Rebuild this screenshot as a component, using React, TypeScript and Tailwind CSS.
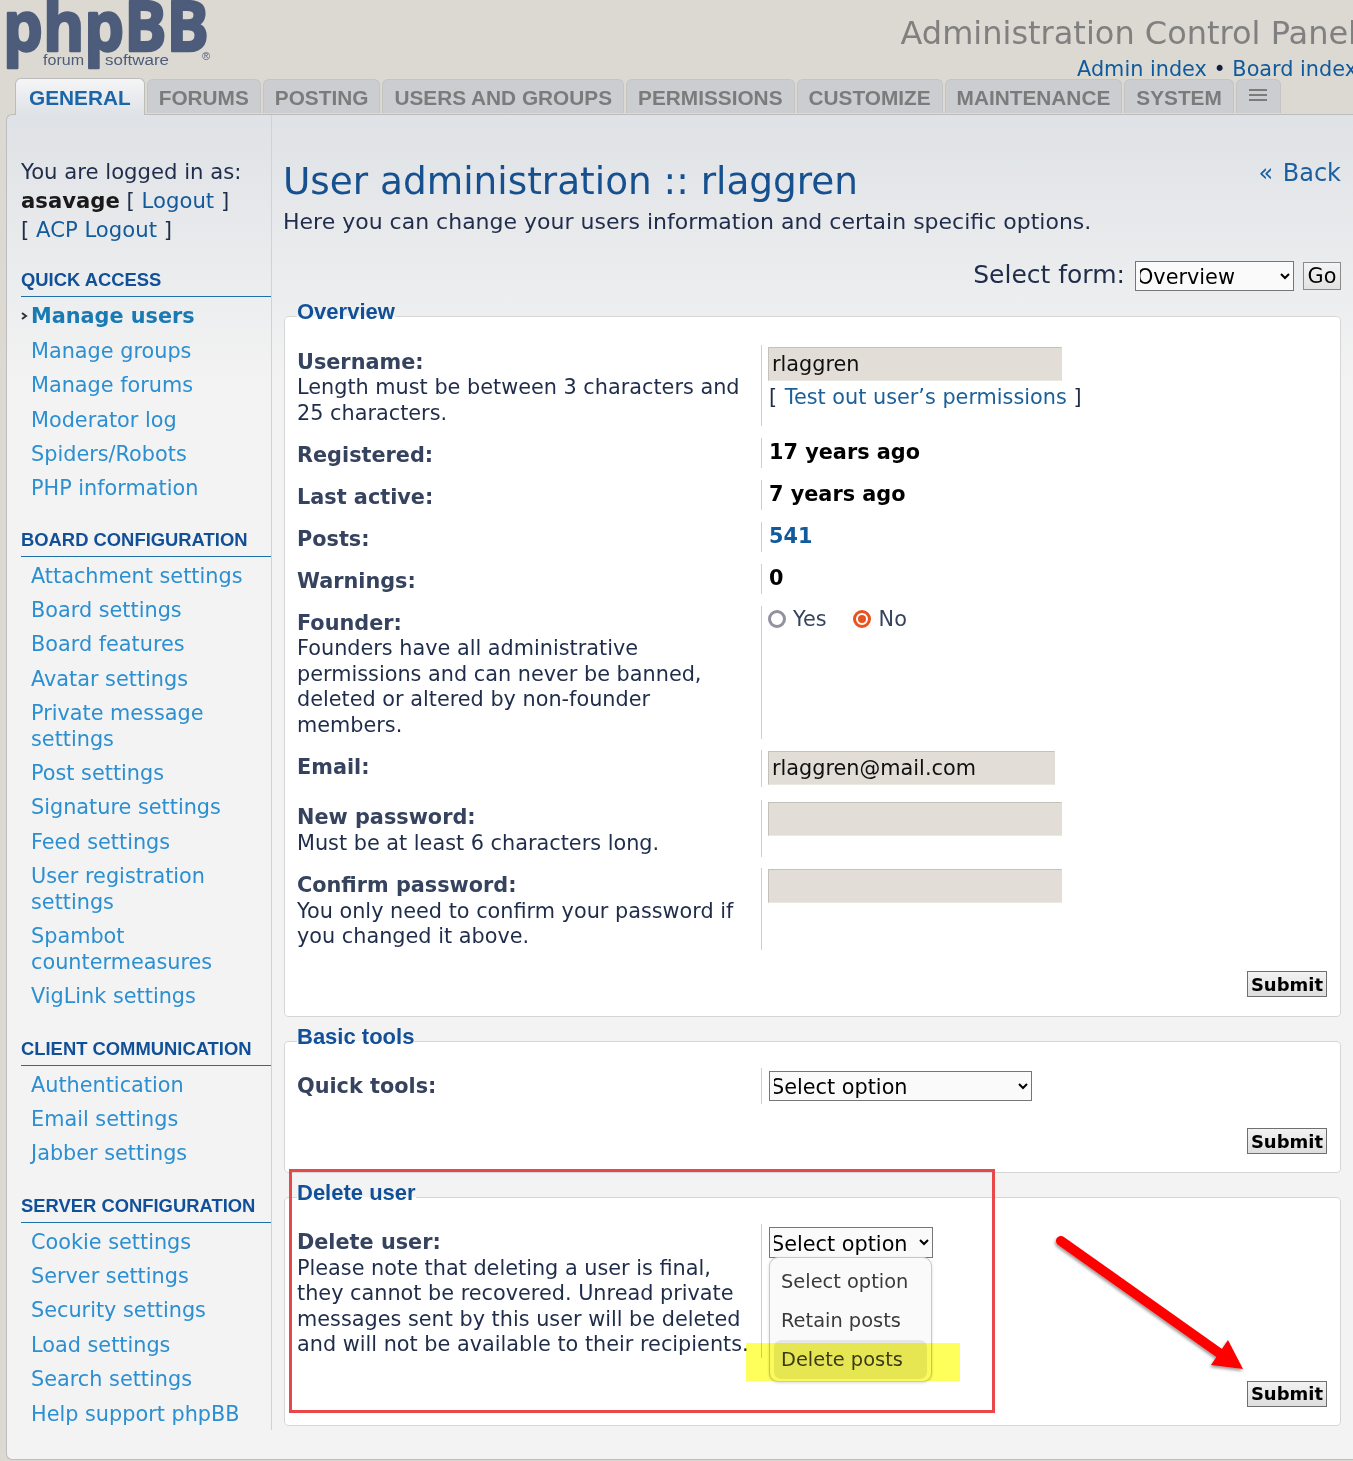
const dv = "font-['DejaVu_Sans',sans-serif]";

function SideGroup({ title, items }: { title: string; items: (string | string[])[] }) {
  return (
    <div className="mt-[23px]">
      <h3 className="font-['Liberation_Sans',sans-serif] font-bold text-[18.4px] leading-[24px] pb-[4px] border-b border-[#1f6fa8] text-[#115098] uppercase whitespace-nowrap">
        {title}
      </h3>
      <ul className="mt-[2px]">
        {items.map((it, i) => (
          <li key={i} className="pl-[10px] py-[4.4px] text-[20.8px] leading-[25.6px] text-[#2b8fd1]">
            {Array.isArray(it) ? it.map((l) => <div key={l}>{l}</div>) : it}
          </li>
        ))}
      </ul>
    </div>
  );
}

function Row({ label, desc, children, low, className }: { label: string; desc?: string; children: React.ReactNode; low?: boolean; className?: string }) {
  return (
    <div className={"flex items-start " + (className ?? "mb-[11.4px]")}>
      <div className={(low ? "pt-[6px] " : "pt-[5px] ") + "w-[464px] shrink-0 pr-[10px] text-[20.8px] leading-[25.6px] text-[#1f2c4a]"}>
        <div className="font-bold text-[#35435f]">{label}</div>
        {desc && <div>{desc}</div>}
      </div>
      <div className="border-l border-[#cfcfcf] pl-[7px] text-[20.8px] leading-[28px] self-stretch">{children}</div>
    </div>
  );
}

function Box({ legend, children, className }: { legend: string; children: React.ReactNode; className?: string }) {
  return (
    <fieldset className={"min-w-0 border border-[#d6d6d6] rounded-[4px] bg-white pl-[12px] pr-[13px] " + (className ?? "")}>
      <legend className="font-['Liberation_Sans',sans-serif] font-bold text-[22px] leading-[24px] pb-[8px] text-[#115098]">
        {legend}
      </legend>
      {children}
    </fieldset>
  );
}

function Submit({ className }: { className?: string }) {
  return (
    <div className={"flex justify-end " + (className ?? "")}>
      <button className="w-[80px] h-[26px] pt-[1px] border border-[#6f6f6f] bg-gradient-to-b from-[#f2f2f2] to-[#dedede] font-bold text-[18px] leading-[22px] text-black">
        Submit
      </button>
    </div>
  );
}

function Field({ className }: { className: string }) {
  return <div className={"-ml-[1px] bg-[#e2ddd7] border border-[#c4c1ba] border-b-[#ebe8e2] border-r-[#e2ddd7] " + className} />;
}

export default function App() {
  return (
    <div className={"relative w-[1353px] h-[1461px] overflow-hidden bg-[#dcd9d2] " + dv}>
      <header className="flex h-[79px]">
        <svg width="220" height="79" viewBox="0 0 220 79" className="shrink-0" aria-label="phpBB logo">
          <text x="3" y="51" fontFamily="'Open Sans', sans-serif" fontWeight="700" fontSize="69" fill="#4c5c7a" stroke="#4c5c7a" strokeWidth="2.5" strokeLinejoin="round" textLength="206" lengthAdjust="spacingAndGlyphs">phpBB</text>
          <text x="43" y="65" fontFamily="'Liberation Sans', sans-serif" fontSize="15.5" fill="#4c5c7a" textLength="41" lengthAdjust="spacingAndGlyphs">forum</text>
          <text x="105" y="65" fontFamily="'Liberation Sans', sans-serif" fontSize="15.5" fill="#4c5c7a" textLength="64" lengthAdjust="spacingAndGlyphs">software</text>
          <text x="202" y="60" fontFamily="'Liberation Sans', sans-serif" fontSize="11" fill="#4c5c7a">®</text>
        </svg>
        <div className="ml-auto -mr-[4px] text-right whitespace-nowrap">
          <div className="mt-[14px] text-[32px] leading-[38px] text-[#808080]">Administration Control Panel</div>
          <div className="mt-[4px] text-[20.8px] leading-[26px] text-[#0f5a9c]">
            Admin index <span className="text-[#10203f]">•</span> Board index
          </div>
        </div>
      </header>

      <nav className="relative z-10 flex gap-[2px] pl-[15px] h-[36px] -mb-[1px] font-['Liberation_Sans',sans-serif] font-bold text-[20.8px] whitespace-nowrap">
        <div className="px-[13px] h-[37px] pt-[6px] leading-[26px] -mt-[1px] rounded-t-[6px] border border-b-0 border-[#bcbcbc] bg-gradient-to-b from-[#f5f5f6] to-[#dfe2e6] text-[#1a66a8]">GENERAL</div>
        {["FORUMS", "POSTING", "USERS AND GROUPS", "PERMISSIONS", "CUSTOMIZE", "MAINTENANCE", "SYSTEM"].map((t) => (
          <div key={t} className="px-[11px] h-[34px] pt-[5px] leading-[26px] rounded-t-[6px] border border-b-0 border-[#c4c4c4] bg-[#cbcdd1] text-[#7b7b7b]">{t}</div>
        ))}
        <div className="w-[45px] h-[34px] rounded-t-[6px] border border-b-0 border-[#c4c4c4] bg-[#cbcdd1] flex flex-col items-center gap-[3px] pt-[9px]">
          <span className="w-[18px] h-[2px] bg-[#7b7b7b]" />
          <span className="w-[18px] h-[2px] bg-[#7b7b7b]" />
          <span className="w-[18px] h-[2px] bg-[#7b7b7b]" />
        </div>
      </nav>

      <main className="flex h-[1346px] ml-[6px] border border-r-0 border-[#bdbdbd] rounded-tl-[6px] rounded-bl-[6px] bg-gradient-to-b from-[#dfe2e6] from-0% to-[#f3f3f3] to-[20%]">
        <aside className="w-[265px] shrink-0 h-[1315px] pl-[14px] pt-[42px] border-r border-[#d2d2d2] text-[20.8px] leading-[29px] text-[#1f2c4a]">
          <div className="text-[21.2px]">You are logged in as:</div>
          <div className="text-[21.2px]"><b className="text-[#1a1a1a]">asavage</b> [ <span className="text-[#115a9c]">Logout</span> ]</div>
          <div className="text-[21.2px]">[ <span className="text-[#115a9c]">ACP Logout</span> ]</div>

          <div className="mt-[24px]">
            <h3 className="font-['Liberation_Sans',sans-serif] font-bold text-[18.4px] leading-[24px] pb-[4px] border-b border-[#1f6fa8] text-[#115098] whitespace-nowrap">QUICK ACCESS</h3>
            <ul className="mt-[3px] -mb-[1px]">
              <li className="flex items-center py-[4.4px] text-[20.8px] leading-[25.6px] font-bold text-[#1a7ab3]">
                <svg width="10" height="10" viewBox="0 0 10 10" className="shrink-0 -mt-[2px]"><path d="M1 2 L5 5 L1 8" fill="none" stroke="#333" strokeWidth="2" /></svg>
                <span>Manage users</span>
              </li>
              {["Manage groups", "Manage forums", "Moderator log", "Spiders/Robots", "PHP information"].map((t) => (
                <li key={t} className="pl-[10px] py-[4.4px] text-[20.8px] leading-[25.6px] text-[#2b8fd1]">{t}</li>
              ))}
            </ul>
          </div>
          <SideGroup title="Board configuration" items={["Attachment settings", "Board settings", "Board features", "Avatar settings", ["Private message", "settings"], "Post settings", "Signature settings", "Feed settings", ["User registration", "settings"], ["Spambot", "countermeasures"], "VigLink settings"]} />
          <SideGroup title="Client communication" items={["Authentication", "Email settings", "Jabber settings"]} />
          <SideGroup title="Server configuration" items={["Cookie settings", "Server settings", "Security settings", "Load settings", "Search settings", "Help support phpBB"]} />
        </aside>

        <section className="flex-1 min-w-0 pl-[12px] pr-[12px] pt-[42px]">
          <div className="flex justify-between items-start">
            <h1 className="-ml-[1px] text-[37.4px] leading-[48px] text-[#16508f] whitespace-nowrap">User administration :: rlaggren</h1>
            <div className="mt-[1px] text-[24px] leading-[30px] text-[#1b5f9e]">« <span className="ml-[2px]">Back</span></div>
          </div>
          <p className="-ml-[1px] mt-[4px] text-[22px] leading-[26px] text-[#1f2c4a]">Here you can change your users information and certain specific options.</p>
          <div className="mt-[26px] mb-[9px] flex justify-end items-center h-[30px]">
            <span className="text-[25px] text-[#1f2c4a] mr-[10px] -mt-[3px]">Select form:</span>
            <select className="w-[159px] h-[30px] pt-[2px] border border-[#767676] bg-[#fafafa] text-[20.8px] text-black indent-[-3px]"><option>Overview</option></select>
            <button className="ml-[9px] w-[38px] h-[28px] border border-[#8a8a8a] bg-gradient-to-b from-[#f4f4f4] to-[#e2e2e2] text-[20.8px] leading-[26px] text-black">Go</button>
          </div>

          <Box legend="Overview">
            <div className="pt-[12.5px]">
              <Row label="Username:" desc="Length must be between 3 characters and 25 characters.">
                <div className="-ml-[1px] w-[294px] h-[34px] mt-[2px] bg-[#e2ddd7] border border-[#c4c1ba] border-b-[#ebe8e2] border-r-[#e2ddd7] pl-[3px] leading-[32px] text-[#101010]">rlaggren</div>
                <div className="mt-[2px] leading-[28px] text-[#1f2c4a]">[ <span className="ml-[1px] text-[#1b6099]">Test out user’s permissions</span> ]</div>
              </Row>
              <Row label="Registered:"><b className="text-black">17 years ago</b></Row>
              <Row label="Last active:"><b className="text-black">7 years ago</b></Row>
              <Row label="Posts:"><b className="text-[#115a9c]">541</b></Row>
              <Row label="Warnings:"><b className="text-black">0</b></Row>
              <Row label="Founder:" desc="Founders have all administrative permissions and can never be banned, deleted or altered by non-founder members.">
                <div className="flex items-center text-[#35435f] -mt-[1px] -ml-[1px]">
                  <span className="w-[18px] h-[18px] rounded-full border-[3px] border-[#92929f] bg-white mr-[7px]" />
                  <span>Yes</span>
                  <span className="ml-[26px] mr-[8px] w-[18px] h-[18px] rounded-full border-[3px] border-[#e8531f] bg-white flex items-center justify-center">
                    <span className="w-[8px] h-[8px] rounded-full bg-[#e8531f]" />
                  </span>
                  <span>No</span>
                </div>
              </Row>
              <Row label="Email:" className="mb-[13.4px]">
                <div className="-ml-[1px] w-[287px] h-[34px] mt-[1px] mb-[2px] bg-[#e2ddd7] border border-[#c4c1ba] border-b-[#ebe8e2] border-r-[#e2ddd7] pl-[3px] leading-[33px] text-[#101010]">rlaggren@mail.com</div>
              </Row>
              <Row label="New password:" desc="Must be at least 6 characters long.">
                <Field className="w-[294px] h-[34px] mt-[1.5px]" />
              </Row>
              <Row label="Confirm password:" desc="You only need to confirm your password if you changed it above.">
                <Field className="w-[294px] h-[34px] mt-[1.5px]" />
              </Row>
            </div>
            <Submit className="mt-[21.4px] mb-[19px]" />
          </Box>

          <Box legend="Basic tools" className="mt-[8px]">
            <div className="pt-[11px]">
              <Row low label="Quick tools:">
                <select className="block w-[263px] h-[30px] pt-[2px] mt-[3px] mb-[3px] border border-[#767676] bg-[#fafafa] text-[20.8px] text-black indent-[-3px]"><option>Select option</option></select>
              </Row>
            </div>
            <Submit className="mt-[24px] mb-[18px]" />
          </Box>

          <Box legend="Delete user" className="mt-[8px]">
            <div className="pt-[11px]">
              <Row low label="Delete user:" desc="Please note that deleting a user is final, they cannot be recovered. Unread private messages sent by this user will be deleted and will not be available to their recipients.">
                <select className="block w-[164px] h-[31px] pt-[2px] mt-[3px] border border-[#767676] bg-[#fafafa] text-[20.8px] text-black indent-[-3px]"><option>Select option</option></select>
              </Row>
            </div>
            <Submit className="mt-[22.5px] mb-[18.5px]" />
          </Box>
        </section>
      </main>

      {/* annotation and open menu, over the page */}
      <div className="absolute left-[769px] top-[1257px] w-[163px] h-[125px] rounded-[9px] border border-[#c8c8c8] bg-[#fafafa] shadow-[0_1px_3px_rgba(0,0,0,0.15)] px-[4px] pt-[4px] text-[19.4px] text-[#3a3a3a]">
        <div className="h-[39px] leading-[40px] pl-[7px]">Select option</div>
        <div className="h-[39px] leading-[40px] pl-[7px]">Retain posts</div>
        <div className="h-[39px] leading-[40px] pl-[7px] rounded-[7px] bg-[#e6e6e6]">Delete posts</div>
      </div>
      <div className="absolute left-[746px] top-[1343px] w-[214px] h-[38px] bg-[#ffff33] opacity-80 mix-blend-multiply" />
      <div className="absolute left-[289px] top-[1169px] w-[706px] h-[244px] border-[3px] border-[#e8484a]" />
      <svg className="absolute left-[1050px] top-[1230px]" width="200" height="145" viewBox="0 0 200 145">
        <defs>
          <filter id="s" x="-10%" y="-10%" width="120%" height="120%">
            <feDropShadow dx="-1" dy="2" stdDeviation="1.5" floodColor="#000" floodOpacity="0.4" />
          </filter>
        </defs>
        <g filter="url(#s)">
          <line x1="11" y1="11" x2="172" y2="125" stroke="#ff0000" strokeWidth="10" strokeLinecap="round" />
          <polygon points="178,110 193,139 161,135" fill="#ff0000" />
        </g>
      </svg>
    </div>
  );
}
